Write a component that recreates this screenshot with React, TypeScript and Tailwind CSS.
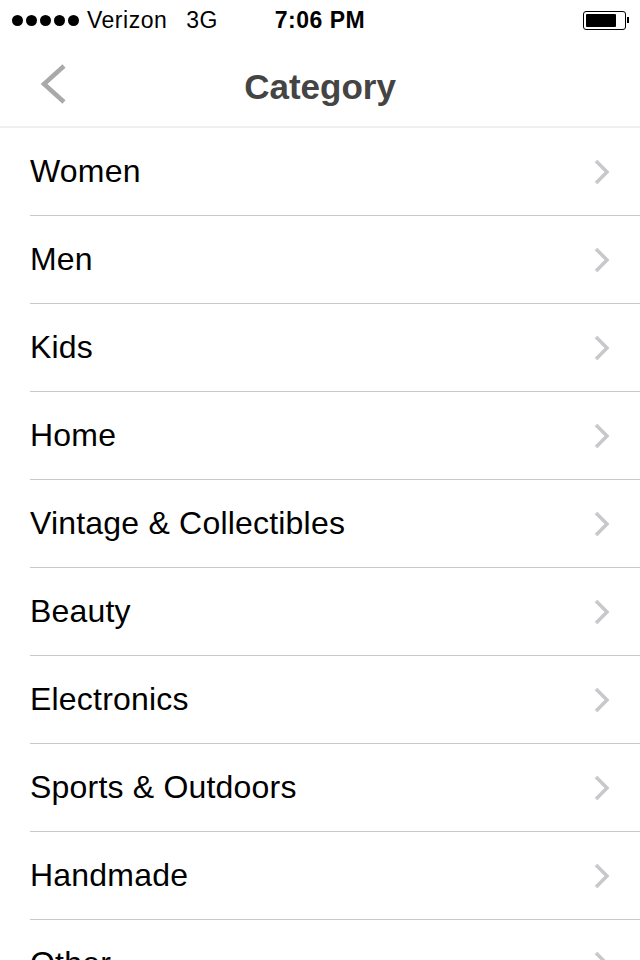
import React from "react";

const categories = [
  "Women",
  "Men",
  "Kids",
  "Home",
  "Vintage & Collectibles",
  "Beauty",
  "Electronics",
  "Sports & Outdoors",
  "Handmade",
  "Other",
];

function Chevron() {
  return (
    <svg width="20" height="28" viewBox="0 0 20 28" className="shrink-0">
      <path d="M4 3 L15 14 L4 25" fill="none" stroke="#c7c7cc" strokeWidth="3.5" />
    </svg>
  );
}

export default function App() {
  return (
    <div className="w-[640px] h-[960px] overflow-hidden bg-white text-black font-['Liberation_Sans',Arial,sans-serif]">
      {/* status bar */}
      <div className="relative h-10 flex items-center text-[23px] tracking-[0.5px]">
        <div className="flex items-center gap-[3px] pl-3">
          {[0, 1, 2, 3, 4].map((i) => (
            <span key={i} className="w-[11px] h-[11px] rounded-full bg-black" />
          ))}
        </div>
        <span className="ml-[8px]">Verizon</span>
        <span className="ml-[19px]">3G</span>
        <span className="absolute left-1/2 -translate-x-1/2 font-bold">7:06 PM</span>
        <div className="ml-auto mr-[11px] flex items-center">
          <div className="w-[43px] h-[19px] rounded-[3px] border border-black p-[2px]">
            <div className="w-[30px] h-full bg-black rounded-[1px]" />
          </div>
          <div className="w-[2px] h-[6px] bg-black ml-[1px]" />
        </div>
      </div>

      {/* nav bar */}
      <div className="relative h-[88px] flex items-center justify-center border-b-2 border-[#efefef]">
        <svg width="30" height="40" viewBox="0 0 30 40" className="absolute left-[38px] top-[24px]">
          <path d="M26 2 L6 20 L26 38" fill="none" stroke="#a9a9a9" strokeWidth="4.5" />
        </svg>
        <h1 className="text-[35px] font-bold text-[#444] mt-[8px]">Category</h1>
      </div>

      {/* list */}
      <ul className="pl-[30px]">
        {categories.map((c) => (
          <li
            key={c}
            className="h-[88px] flex items-center justify-between pr-[28px] border-b border-[#c8c8cc] text-[32px] tracking-[0.2px]"
          >
            <span className="-mt-[2px]">{c}</span>
            <Chevron />
          </li>
        ))}
      </ul>
    </div>
  );
}
